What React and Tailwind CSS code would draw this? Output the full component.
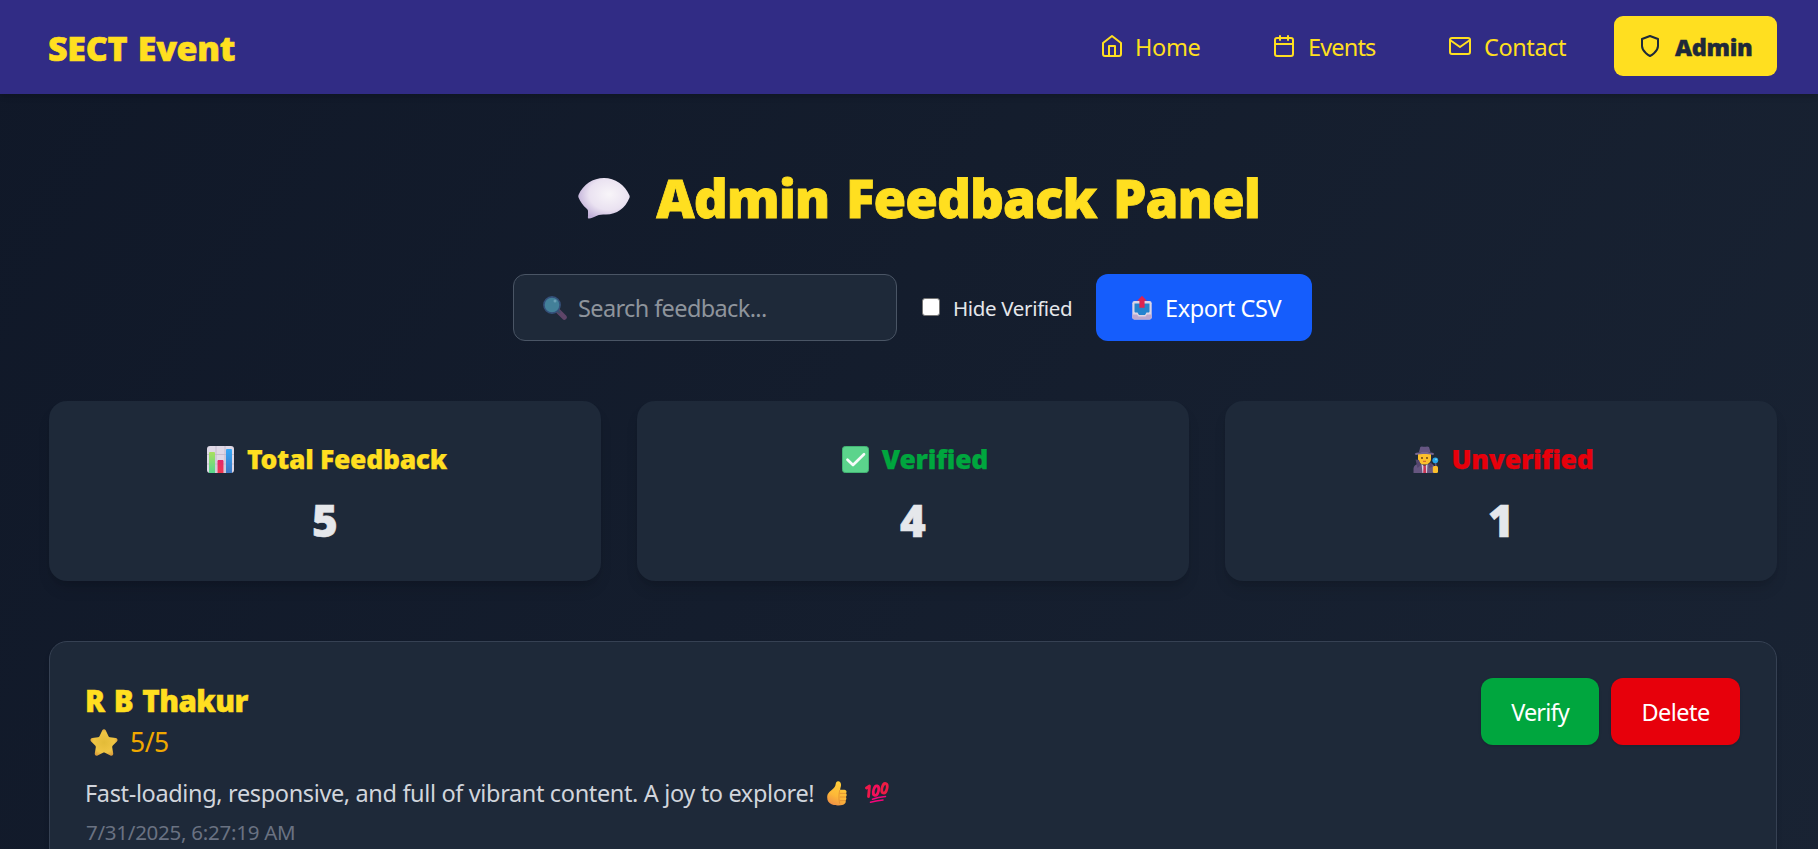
import React from "react";
import { FiHome, FiCalendar, FiMail, FiShield } from "react-icons/fi";

function SpeechBalloon({ className }) {
  return (
    <svg viewBox="0 0 52 41" className={className} role="img" aria-label="💬">
      <defs>
        <radialGradient id="balloon" cx="0.6" cy="0.4" r="0.65">
          <stop offset="0" stopColor="#f8f5f9" />
          <stop offset="0.6" stopColor="#eae2f1" />
          <stop offset="1" stopColor="#c0afd8" />
        </radialGradient>
      </defs>
      <path
        d="M26 0C37 0 47 7 51.500 17.500C51.800 18.300 51.800 19 51.500 19.800C47 30.500 39 36.500 28 36.500C24 36.500 21 36.600 19.500 37.500C16.500 39 13 40.500 11 40.600C9.700 40.600 9.800 39.500 10 38V33.500C10 32 9.500 31.500 8.500 30.500C5 27.500 2.500 24 0.500 19.500C0.200 18.700 0.200 18 0.500 17C5 6.500 15 0 26 0Z"
        fill="url(#balloon)"
      />
    </svg>
  );
}

function Magnifier({ className }) {
  return (
    <svg viewBox="0 0 24 24" className={className} role="img" aria-label="🔍">
      <path d="M15.500 15.500L21.300 21.300" stroke="#5f4568" strokeWidth="5" strokeLinecap="round" />
      <path d="M14 14L17 17" stroke="#3d4f68" strokeWidth="2.500" />
      <circle cx="9" cy="9" r="8.100" fill="#438099" stroke="#34507a" strokeWidth="1.600" />
      <circle cx="12" cy="5" r="1.500" fill="#6a9fb5" />
    </svg>
  );
}

function OutboxTray({ className }) {
  return (
    <svg viewBox="0 0 20 24" className={className} role="img" aria-label="📤">
      <rect x="0.300" y="5" width="19.400" height="18.500" rx="2.200" fill="#dcd4e4" />
      <path d="M2.500 7.500H17.500V15.500C17.500 16 17 16.500 16.500 16.500H14.500L13 19H7L5.500 16.500H3.500C3 16.500 2.500 16 2.500 15.500Z" fill="#2483cf" />
      <path d="M0.300 18.500H5L6.500 20.500H13.500L15 18.500H19.700V21.300C19.700 22.500 18.700 23.500 17.500 23.500H2.500C1.300 23.500 0.300 22.500 0.300 21.300Z" fill="#bba8d0" />
      <path d="M10 0L14.300 4.500H12.300V11.500H7.700V4.500H5.700Z" fill="#dd2450" stroke="#dd2450" strokeWidth="0.500" strokeLinejoin="round" />
    </svg>
  );
}

function BarChart({ className }) {
  return (
    <svg viewBox="0 0 27 27" className={className} role="img" aria-label="📊">
      <defs>
        <linearGradient id="greenBar" x1="0" y1="0" x2="0" y2="1">
          <stop offset="0" stopColor="#a9e05f" />
          <stop offset="1" stopColor="#55d68d" />
        </linearGradient>
        <linearGradient id="redBar" x1="0" y1="0" x2="0" y2="1">
          <stop offset="0" stopColor="#e2286c" />
          <stop offset="1" stopColor="#f0384f" />
        </linearGradient>
        <linearGradient id="blueBar" x1="0" y1="0" x2="0" y2="1">
          <stop offset="0" stopColor="#35a8f8" />
          <stop offset="1" stopColor="#3d78c4" />
        </linearGradient>
      </defs>
      <rect width="27" height="27" rx="3" fill="#dfd8e6" />
      <path d="M9 0V27M18 0V27M0 8.500H27M0 18H27" stroke="#c3bacd" strokeWidth="0.900" />
      <path d="M2 27V7.200C2 6.500 2.500 6 3.200 6H6.800C7.500 6 8 6.500 8 7.200V27Z" fill="url(#greenBar)" />
      <path d="M10.500 27V15.200C10.500 14.500 11 14 11.700 14H15.300C16 14 16.500 14.500 16.500 15.200V27Z" fill="url(#redBar)" />
      <path d="M19 27V4.200C19 3.500 19.500 3 20.200 3H23.800C24.500 3 25 3.500 25 4.200V27Z" fill="url(#blueBar)" />
    </svg>
  );
}

function CheckBox({ className }) {
  return (
    <svg viewBox="0 0 27 27" className={className} role="img" aria-label="✅">
      <rect x="0.500" y="0.500" width="26" height="26" rx="2.800" fill="#5bd48c" stroke="#43b474" />
      <path d="M5.500 13.800L11 19L22 8.300" fill="none" stroke="#f7fbfa" strokeWidth="2.700" strokeLinecap="round" strokeLinejoin="round" />
    </svg>
  );
}

function Detective({ className }) {
  return (
    <svg viewBox="0 0 26 27" className={className} role="img" aria-label="🕵️">
      <path d="M0.500 27V23C0.500 20 3 18 6 17.500L12 20L17 17.500C20 18 21.500 19.500 21.500 22V27Z" fill="#665680" />
      <path d="M8.500 17.500L11.500 21L14.500 17.500L14 27H9.500Z" fill="#d8cfe0" />
      <path d="M10.500 19.500H12.800L13.200 27H10.200Z" fill="#c73455" />
      <path d="M5 8H18V13C18 16.500 15 18.500 11.500 18.500C8 18.500 5 16.500 5 13Z" fill="#fdc02c" />
      <circle cx="9" cy="12" r="0.900" fill="#56351f" />
      <circle cx="14" cy="12" r="0.900" fill="#56351f" />
      <path d="M10 15.300H13" stroke="#c64a32" strokeWidth="0.900" />
      <path d="M2.500 13.500L6 14L8 19L4.500 22Z" fill="#55466f" />
      <path d="M16.500 17L18.500 16.500L19 21L16 22Z" fill="#55466f" />
      <path d="M6 6L7.300 1C8.500 -0.200 10 0.800 11.500 0.800C13 0.800 14.500 -0.200 16 1L17.500 6Z" fill="#665683" />
      <path d="M2 7.500C5 5.500 18 5.500 21 7.500C21.500 8.500 20.500 9 19.500 8.900C15 7.800 8 7.800 3.500 8.900C2.500 9 1.500 8.500 2 7.500Z" fill="#75648f" />
      <path d="M22.500 17L23 21" stroke="#60527c" strokeWidth="1.600" />
      <rect x="19.800" y="20" width="5.200" height="7" rx="1.500" fill="#fdc02c" />
      <circle cx="22.300" cy="14.300" r="2.900" fill="#25a7ea" />
      <circle cx="23" cy="13.500" r="1" fill="#77d0f8" />
    </svg>
  );
}

function Star({ className }) {
  return (
    <svg viewBox="0 0 28 27" className={className} role="img" aria-label="⭐">
      <defs>
        <radialGradient id="star" cx="0.500" cy="0.500" r="0.550">
          <stop offset="0" stopColor="#e3bb38" />
          <stop offset="0.700" stopColor="#efc544" />
          <stop offset="1" stopColor="#d99b3c" />
        </radialGradient>
      </defs>
      <path
        d="M12.300 1.300C13 -0.100 15 -0.100 15.700 1.300L18.500 7.200C18.800 7.800 19.300 8.200 20 8.300L25.800 9.100C27.500 9.300 28.100 11.200 26.900 12.400L22.800 16.500C22.300 17 22.100 17.600 22.200 18.300L23.200 24.300C23.500 26 21.900 27.200 20.400 26.400L15 23.700C14.400 23.400 13.600 23.400 13 23.700L7.600 26.400C6.100 27.200 4.500 26 4.800 24.300L5.800 18.300C5.900 17.600 5.700 17 5.200 16.500L1.100 12.400C-0.100 11.200 0.500 9.300 2.200 9.100L8 8.300C8.700 8.200 9.200 7.800 9.500 7.200Z"
        fill="url(#star)"
      />
    </svg>
  );
}

function ThumbsUp({ className }) {
  return (
    <svg viewBox="0 0 20 25" className={className} role="img" aria-label="👍">
      <defs>
        <linearGradient id="thumb" x1="0.700" y1="0" x2="0.300" y2="1">
          <stop offset="0" stopColor="#ffcf3a" />
          <stop offset="0.600" stopColor="#fdb838" />
          <stop offset="1" stopColor="#ef8f45" />
        </linearGradient>
      </defs>
      <path
        d="M10.300 0.400C12.800 -0.200 14.300 2 14 4.500C13.800 6.300 13 8 13.200 8.700H17.300C19.500 8.700 20.100 11 19 12.300C20 13.300 19.900 15 18.900 15.900C19.700 17 19.500 18.600 18.500 19.400C19.200 20.800 18.500 23 16.300 23.700C13 24.800 8 24.800 4.500 23.300C1.500 22 0.200 19.500 0.200 16.500C0.200 12.500 2.500 11 5 8.800C7.500 6.500 8.300 5.500 8.800 2.500C8.900 1.500 9.500 0.600 10.300 0.400Z"
        fill="url(#thumb)"
      />
      <path d="M13 12.400H18.700M13 16H18.600M13 19.600H18.200M12.600 9.500C11.800 13 11.500 18 12.600 22.500" fill="none" stroke="#e08e32" strokeWidth="0.800" strokeLinecap="round" />
    </svg>
  );
}

function HundredPoints({ className }) {
  return (
    <svg viewBox="0 0 24 21" className={className} role="img" aria-label="💯" fill="none" strokeLinecap="round" strokeLinejoin="round">
      <path d="M1.500 6L4.500 4L3.500 14.500" stroke="#f0184a" strokeWidth="2.800" />
      <ellipse cx="11" cy="8.600" rx="2.500" ry="4.900" transform="rotate(14 11 8.600)" stroke="#f5105a" strokeWidth="2.700" />
      <ellipse cx="19.500" cy="6.300" rx="2.500" ry="4.900" transform="rotate(14 19.500 6.300)" stroke="#ee1c45" strokeWidth="2.700" />
      <path d="M7.500 17.200C11 15.900 15.500 15 20.500 14.500M5.500 20.200C9.500 18.900 13.500 18.300 18 17.900" stroke="#f5057a" strokeWidth="1.500" />
    </svg>
  );
}

function NavItem({ icon: Icon, label, className }) {
  return (
    <a className={`flex h-15 items-center text-[#ffdf20] ${className}`}>
      <Icon className="size-6 shrink-0" />
      <span className="pt-0.5">{label}</span>
    </a>
  );
}

function StatCard({ icon, label, value, color, title }) {
  return (
    <div className="h-45 rounded-[18px] bg-[#1e2939] p-9 text-center shadow-[0_10px_15px_-3px_rgba(0,0,0,0.12),0_4px_6px_-4px_rgba(0,0,0,0.12)]">
      <h2 className={`flex h-11 items-center justify-center gap-[13px] pl-1 text-[26.5px] font-black leading-[42px] [-webkit-text-stroke:0.25px] ${color}`}>
        {icon}
        <span className={title}>{label}</span>
      </h2>
      <p className="mt-[11px] text-[44px] font-black leading-[56px] text-[#e5e7eb] [-webkit-text-stroke:0.6px]">{value}</p>
    </div>
  );
}

export default function App() {
  return (
    <div className="h-[849px] overflow-hidden bg-linear-to-br from-[#101828] to-[#1e2939] bg-size-[100%_3000px] font-['Noto_Sans','Open_Sans',sans-serif] text-[#e5e7eb]">
      <nav className="flex h-[94px] items-start justify-between bg-[#312c85] pl-12 pr-[41px] pt-4 text-[23.5px] leading-9 shadow-md">
        <div className="flex h-15 items-center pt-1 text-[34px] font-black leading-12 tracking-[-0.3px] text-[#ffdf20] [word-spacing:2px] [-webkit-text-stroke:0.6px]">SECT Event</div>
        <div className="flex">
          <NavItem icon={FiHome} label="Home" className="w-[172px] gap-[11px] tracking-[-0.37px]" />
          <NavItem icon={FiCalendar} label="Events" className="w-[176px] gap-3 tracking-[-0.85px]" />
          <NavItem icon={FiMail} label="Contact" className="w-[166px] gap-3 tracking-[-0.42px]" />
          <a className="flex h-15 w-[163px] items-center gap-[13px] rounded-[9px] bg-[#ffdf20] pl-6 font-black tracking-[-0.33px] text-[#1e2939] [-webkit-text-stroke:0.4px]">
            <FiShield className="size-6 shrink-0" />
            <span className="pt-0.5">Admin</span>
          </a>
        </div>
      </nav>

      <main className="pl-[49px] pr-[41px]">
        <h1 className="mt-[77px] flex h-[54px] items-center justify-center gap-[26px] pl-3 text-[53px] font-black leading-[54px] tracking-[-1.05px] text-[#ffdf20] [word-spacing:4px] [-webkit-text-stroke:0.8px]">
          <SpeechBalloon className="h-[41px] w-[52px]" />
          <span>Admin Feedback Panel</span>
        </h1>

        <div className="mt-[49px] flex h-[67px] items-center pl-[464px] text-[23.5px] leading-9">
          <div className="flex h-[67px] w-96 items-center gap-[11px] rounded-xl border border-[#4a5565] bg-[#1e2939] pl-[29px]">
            <Magnifier className="size-6" />
            <span className="tracking-[-0.62px] text-[#8e949c]">Search feedback...</span>
          </div>
          <label className="ml-6 flex w-[175px] items-center gap-[13px] text-[20.5px] tracking-[-0.34px]">
            <span className="mb-0.5 ml-px size-[18px] rounded-[3px] border border-[#767676] bg-white" />
            <span>Hide Verified</span>
          </label>
          <button className="flex h-[67px] w-54 items-center gap-[13px] rounded-xl bg-[#155dfc] pl-9 tracking-[-0.41px] text-white">
            <OutboxTray className="h-6 w-5" />
            <span>Export CSV</span>
          </button>
        </div>

        <section className="mt-15 grid grid-cols-3 gap-9">
          <StatCard icon={<BarChart className="size-[27px]" />} label="Total Feedback" value="5" color="text-[#ffdf20]" title="tracking-[-0.3px]" />
          <StatCard icon={<CheckBox className="size-[27px]" />} label="Verified" value="4" color="text-[#00a63e]" title="tracking-[-0.25px]" />
          <StatCard icon={<Detective className="h-[27px] w-[26px]" />} label="Unverified" value="1" color="text-[#e7000b]" title="tracking-[-0.25px]" />
        </section>

        <article className="mt-15 flex h-[260px] items-start justify-between rounded-[18px] border border-[#364153] bg-[#1e2939] p-9 shadow-md">
          <div>
            <h3 className="-ml-px h-[43px] text-[29.5px] font-black leading-[46px] tracking-[-0.5px] text-[#ffdf20] [word-spacing:2px] [-webkit-text-stroke:0.5px]">R B Thakur</h3>
            <div className="flex h-[42px] items-center gap-3 pl-1 text-[26.5px] leading-[42px] tracking-[-0.5px] text-[#f0a800]">
              <Star className="h-[27px] w-7" />
              <span>5/5</span>
            </div>
            <p className="-ml-px mt-3 flex h-9 items-center text-[23.5px] leading-9 text-[#d1d5dc]">
              <span className="tracking-[-0.36px]">Fast-loading, responsive, and full of vibrant content. A joy to explore!</span>
              <ThumbsUp className="ml-[13px] h-[25px] w-5" />
              <HundredPoints className="mb-0.5 ml-[18px] h-[21px] w-6" />
            </p>
            <p className="mt-1.5 text-[20.5px] leading-[30px] tracking-[-0.26px] text-[#6a7282]">7/31/2025, 6:27:19 AM</p>
          </div>
          <div className="flex gap-3 text-[23.5px] leading-9 text-white">
            <button className="h-[67px] w-[118px] rounded-xl bg-[#00a63e] tracking-[-0.85px] shadow-sm">Verify</button>
            <button className="h-[67px] w-[129px] rounded-xl bg-[#e7000b] tracking-[-0.54px] shadow-sm">Delete</button>
          </div>
        </article>
      </main>
    </div>
  );
}
